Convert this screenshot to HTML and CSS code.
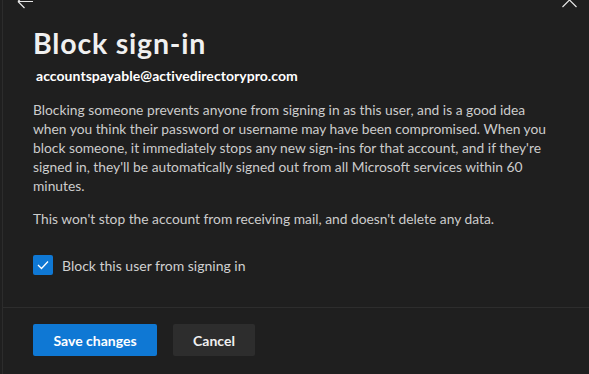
FILE: index.html
```html
<!DOCTYPE html>
<html lang="en">
<head>
<meta charset="utf-8">
<title>Block sign-in</title>
<link rel="stylesheet" href="styles.css">
</head>
<body>
<div class="panel">
  <div class="topbar">
    <svg class="icon" width="22" height="9" viewBox="14 0 22 9"><path d="M33 1.5H18M18 1.5l6.5 6.5M18 1.5l4-4" fill="none" stroke="#e6e6e6" stroke-width="1.2"/></svg>
    <svg class="icon" width="18" height="9" viewBox="561 0 18 9"><path d="M562.5 -7l14 14M576.5 -7l-14 14" fill="none" stroke="#e6e6e6" stroke-width="1.2"/></svg>
  </div>
  <div class="content">
    <h1 class="title">Block sign-in</h1>
    <div class="email">accountspayable@activedirectorypro.com</div>
    <p class="text first">Blocking someone prevents anyone from signing in as this user, and is a good idea when you think their password or username may have been compromised. When you block someone, it immediately stops any new sign-ins for that account, and if they're signed in, they'll be automatically signed out from all Microsoft services within 60 minutes.</p>
    <p class="text">This won't stop the account from receiving mail, and doesn't delete any data.</p>
    <label class="check">
      <span class="box"><svg width="12" height="10" viewBox="0 0 12 10"><path d="M1 5l3.5 3.5L11 1.5" fill="none" stroke="#fff" stroke-width="1.3"/></svg></span>
      <span class="check-label">Block this user from signing in</span>
    </label>
  </div>
  <div class="footer">
    <button class="btn primary">Save changes</button>
    <button class="btn secondary">Cancel</button>
  </div>
</div>
</body>
</html>
```

FILE: styles.css
```css
* {
  box-sizing: border-box;
}
html, body {
  margin: 0;
  padding: 0;
  background: #1f1f1f;
  height: 100%;
  overflow: hidden;
}
body {
  font-family: "Lato", "Open Sans", sans-serif;
  color: #d6d6d6;
}
.panel {
  margin-left: 2px;
  border-left: 1px solid #2c2c2c;
  height: 374px;
  display: flex;
  flex-direction: column;
}
.topbar {
  display: flex;
  justify-content: space-between;
  height: 9px;
  padding: 0 10px 0 11px;
}
.icon {
  display: block;
}
.content {
  padding: 16px 0 0 30px;
  flex: 1;
}
.title {
  margin: 0;
  font-size: 28.5px;
  font-weight: 700;
  color: #f0f0f0;
  line-height: 36px;
  letter-spacing: 0.8px;
}
.email {
  margin-top: 6px;
  font-size: 14px;
  font-weight: 700;
  color: #ffffff;
  line-height: 18px;
  padding-left: 3px;
  letter-spacing: 0.05px;
}
.text {
  margin: 14px 0 0 0;
  width: 528px;
  font-size: 13.8px;
  line-height: 19px;
  color: #cccccc;
}
.text.first {
  margin-top: 14.5px;
}
.check {
  display: flex;
  align-items: center;
  gap: 9px;
  margin-top: 27.5px;
}
.box {
  width: 20px;
  height: 20px;
  background: #0f78d4;
  border-radius: 2px;
  display: flex;
  align-items: center;
  justify-content: center;
}
.check-label {
  font-size: 14px;
  color: #d0d0d0;
}
.footer {
  border-top: 1px solid #2d2d2d;
  height: 67px;
  display: flex;
  align-items: flex-start;
  gap: 16px;
  padding: 16px 0 0 30px;
}
.btn {
  height: 32px;
  border: none;
  border-radius: 2px;
  font-family: inherit;
  font-size: 14px;
  font-weight: 700;
  padding: 0;
}
.primary {
  width: 124px;
  background: #0f78d4;
  color: #fff;
}
.secondary {
  width: 82px;
  background: #2d2d2d;
  color: #f0f0f0;
}
```
